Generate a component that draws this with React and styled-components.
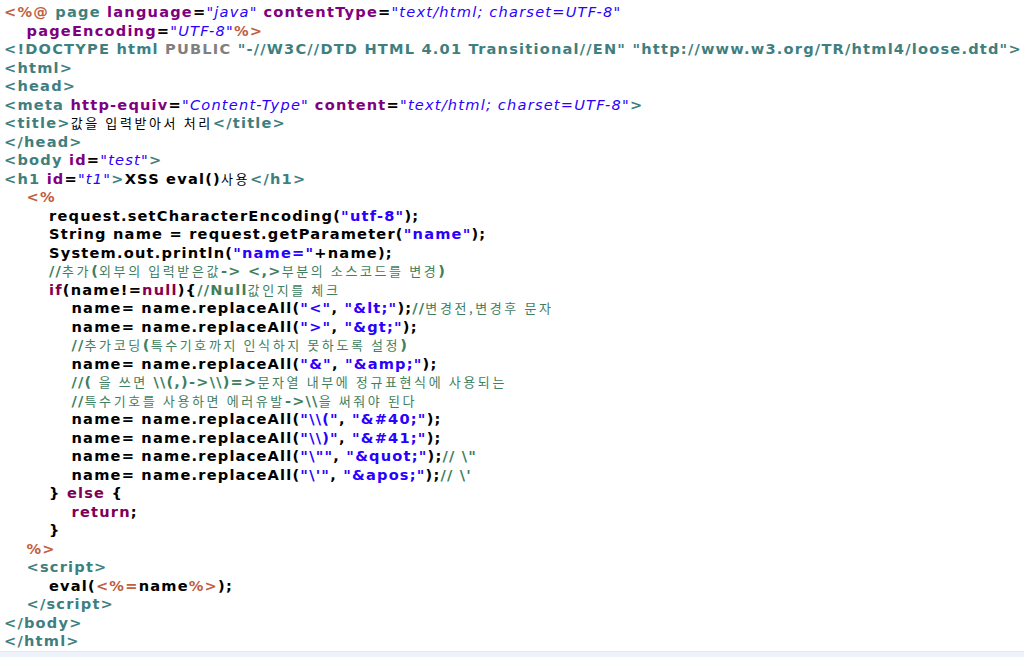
import React from "react";
import styled, { createGlobalStyle } from "styled-components";

const Global = createGlobalStyle`
  html, body { margin: 0; padding: 0; background: #ffffff; }
`;

const Editor = styled.div`
  width: 1024px;
  height: 657px;
  box-sizing: border-box;
  padding: 3px 0 0 4px;
  background: #ffffff;
  font-family: "DejaVu Sans", Verdana, "Noto Sans CJK KR", sans-serif;
  font-weight: bold;
  font-size: 14.6px;
  letter-spacing: 1.2px;
  overflow: hidden;
  position: relative;
  display: flex;
  flex-direction: column;
`;

const Line = styled.div`
  height: 18.5px;
  line-height: 18.5px;
  white-space: pre;
  padding-left: ${p => p.$indent * 22.5}px;
  color: #000;
`;

const colors = {
  tag: "#3f7f7f",
  attr: "#7f007f",
  val: "#2a00ff",
  jsp: "#bf5f3f",
  kw: "#7f0055",
  str: "#2a00ff",
  cm: "#3f7f5f",
  gray: "#808080",
  tx: "#000000",
};

const Tok = styled.span`
  color: ${p => colors[p.$t]};
  font-style: ${p => (p.$t === "val" ? "italic" : "normal")};
  font-weight: ${p => (p.$t === "val" ? "normal" : "bold")};
`;

const Ko = styled.span`
  font-family: "Noto Sans CJK KR", sans-serif;
  font-weight: normal;
  font-size: 13px;
  letter-spacing: 2.6px;
`;

const BottomBar = styled.div`
  position: absolute;
  left: 0;
  right: 0;
  bottom: 0;
  height: 5px;
  background: #eef3fb;
  border-top: 1px solid #e0e8f4;
`;

const L = (indent, ...toks) => ({ indent, toks });

const lines = [
  L(0, ["jsp", "<%@ "], ["tag", "page "], ["attr", "language"], ["tx", "="], ["val", "\"java\" "], ["attr", "contentType"], ["tx", "="], ["val", "\"text/html; charset=UTF-8\""]),
  L(1, ["attr", "pageEncoding"], ["tx", "="], ["val", "\"UTF-8\""], ["jsp", "%>"]),
  L(0, ["tag", "<!DOCTYPE html "], ["gray", "PUBLIC "], ["tag", "\"-//W3C//DTD HTML 4.01 Transitional//EN\" \"http://www.w3.org/TR/html4/loose.dtd\">"]),
  L(0, ["tag", "<html>"]),
  L(0, ["tag", "<head>"]),
  L(0, ["tag", "<meta "], ["attr", "http-equiv"], ["tx", "="], ["val", "\"Content-Type\" "], ["attr", "content"], ["tx", "="], ["val", "\"text/html; charset=UTF-8\""], ["tag", ">"]),
  L(0, ["tag", "<title>"], ["ko", "값을 입력받아서 처리"], ["tag", "</title>"]),
  L(0, ["tag", "</head>"]),
  L(0, ["tag", "<body "], ["attr", "id"], ["tx", "="], ["val", "\"test\""], ["tag", ">"]),
  L(0, ["tag", "<h1 "], ["attr", "id"], ["tx", "="], ["val", "\"t1\""], ["tag", ">"], ["tx", "XSS eval()"], ["ko", "사용"], ["tag", "</h1>"]),
  L(1, ["jsp", "<%"]),
  L(2, ["tx", "request.setCharacterEncoding("], ["str", "\"utf-8\""], ["tx", ");"]),
  L(2, ["tx", "String name = request.getParameter("], ["str", "\"name\""], ["tx", ");"]),
  L(2, ["tx", "System.out.println("], ["str", "\"name=\""], ["tx", "+name);"]),
  L(2, ["cm", "//"], ["kocm", "추가"], ["cm", "("], ["kocm", "외부의 입력받은값"], ["cm", "-> <,>"], ["kocm", "부분의 소스코드를 변경"], ["cm", ")"]),
  L(2, ["kw", "if"], ["tx", "(name!="], ["kw", "null"], ["tx", "){"], ["cm", "//Null"], ["kocm", "값인지를 체크"]),
  L(3, ["tx", "name= name.replaceAll("], ["str", "\"<\""], ["tx", ", "], ["str", "\"&lt;\""], ["tx", ");"], ["cm", "//"], ["kocm", "변경전,변경후 문자"]),
  L(3, ["tx", "name= name.replaceAll("], ["str", "\">\""], ["tx", ", "], ["str", "\"&gt;\""], ["tx", ");"]),
  L(3, ["cm", "//"], ["kocm", "추가코딩"], ["cm", "("], ["kocm", "특수기호까지 인식하지 못하도록 설정"], ["cm", ")"]),
  L(3, ["tx", "name= name.replaceAll("], ["str", "\"&\""], ["tx", ", "], ["str", "\"&amp;\""], ["tx", ");"]),
  L(3, ["cm", "//( "], ["kocm", "을 쓰면 "], ["cm", "\\\\(,)->\\\\)=>"], ["kocm", "문자열 내부에 정규표현식에 사용되는"]),
  L(3, ["cm", "//"], ["kocm", "특수기호를 사용하면 에러유발"], ["cm", "->\\\\"], ["kocm", "을 써줘야 된다"]),
  L(3, ["tx", "name= name.replaceAll("], ["str", "\"\\\\(\""], ["tx", ", "], ["str", "\"&#40;\""], ["tx", ");"]),
  L(3, ["tx", "name= name.replaceAll("], ["str", "\"\\\\)\""], ["tx", ", "], ["str", "\"&#41;\""], ["tx", ");"]),
  L(3, ["tx", "name= name.replaceAll("], ["str", "\"\\\"\""], ["tx", ", "], ["str", "\"&quot;\""], ["tx", ");"], ["cm", "// \\\""]),
  L(3, ["tx", "name= name.replaceAll("], ["str", "\"\\'\""], ["tx", ", "], ["str", "\"&apos;\""], ["tx", ");"], ["cm", "// \\'"]),
  L(2, ["tx", "} "], ["kw", "else"], ["tx", " {"]),
  L(3, ["kw", "return"], ["tx", ";"]),
  L(2, ["tx", "}"]),
  L(1, ["jsp", "%>"]),
  L(1, ["tag", "<script>"]),
  L(2, ["tx", "eval("], ["jsp", "<%="], ["tx", "name"], ["jsp", "%>"], ["tx", ");"]),
  L(1, ["tag", "</script>"]),
  L(0, ["tag", "</body>"]),
  L(0, ["tag", "</html>"]),
];

export default function App() {
  return (
    <>
      <Global />
      <Editor>
        {lines.map((ln, i) => (
          <Line key={i} $indent={ln.indent}>
            {ln.toks.map(([t, s], j) =>
              t === "ko" ? (
                <Ko key={j}>{s}</Ko>
              ) : t === "kocm" ? (
                <Tok key={j} $t="cm"><Ko>{s}</Ko></Tok>
              ) : (
                <Tok key={j} $t={t}>{s}</Tok>
              )
            )}
          </Line>
        ))}
        <BottomBar />
      </Editor>
    </>
  );
}
